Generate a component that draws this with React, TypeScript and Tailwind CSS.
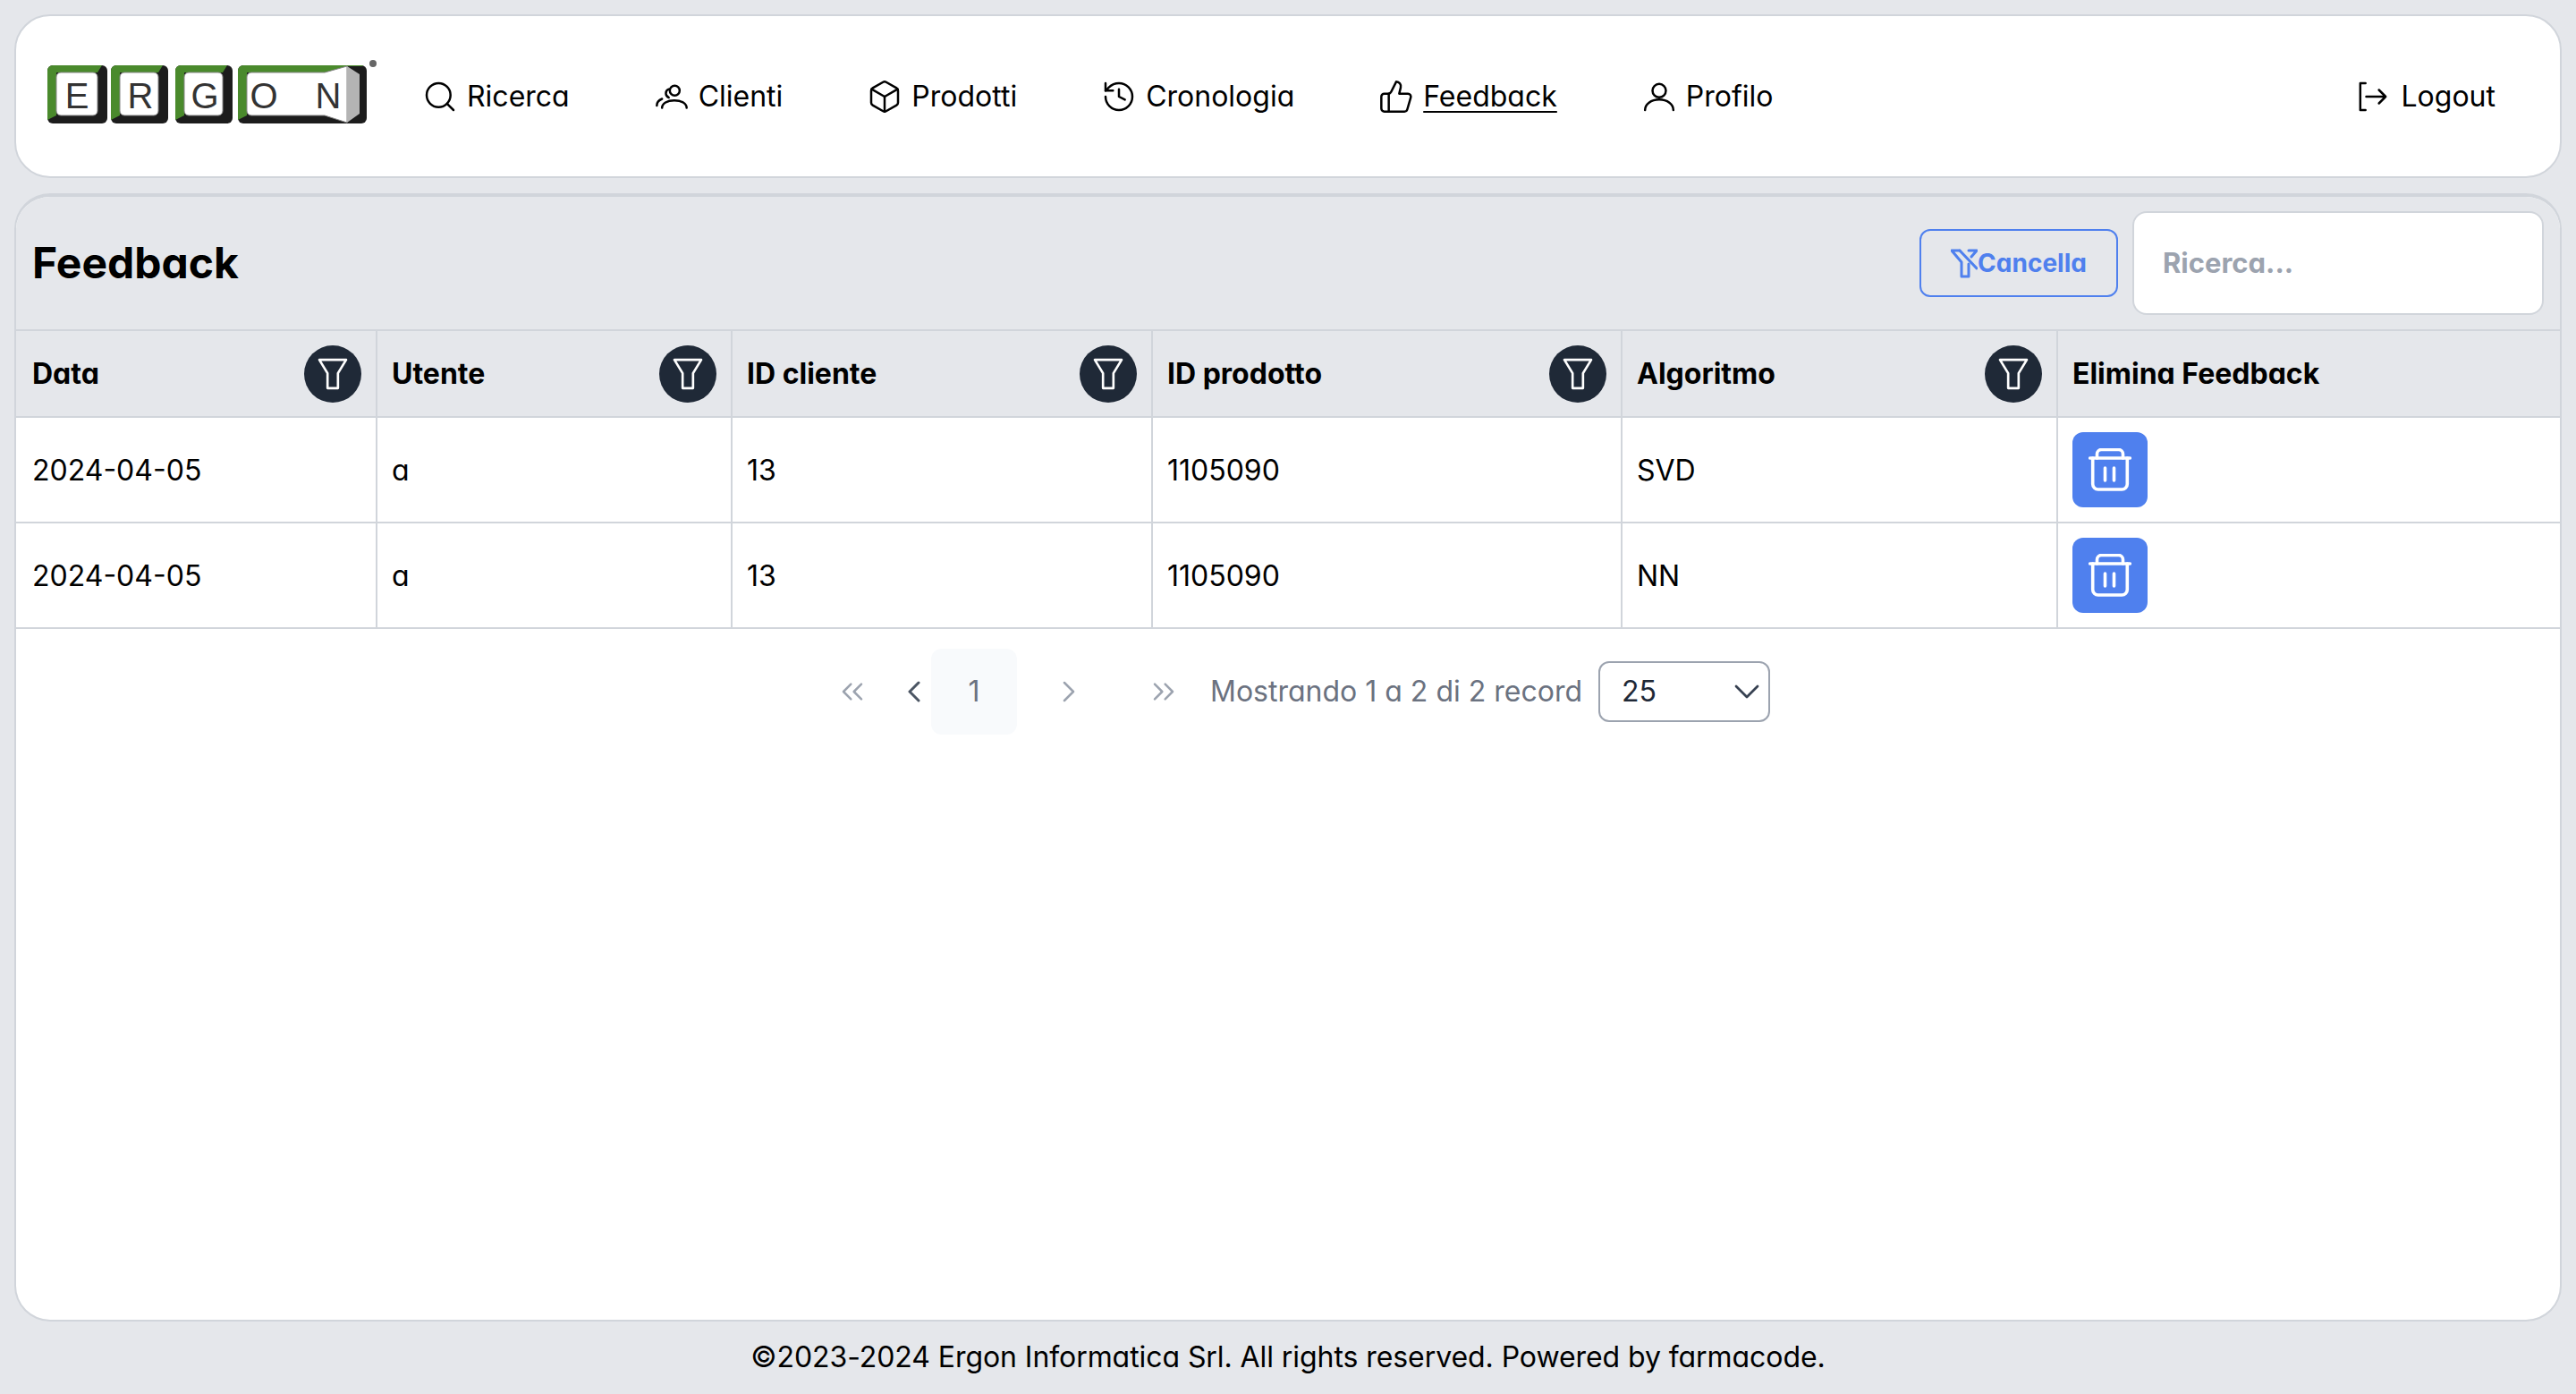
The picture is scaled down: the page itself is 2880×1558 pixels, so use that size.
import React from "react";
import { Search, Box, History, ThumbsUp, ChevronsLeft, ChevronLeft, ChevronRight, ChevronsRight, ChevronDown } from "lucide-react";

const IC = ({ children, className = "w-10 h-10" }: { children: React.ReactNode; className?: string }) => (
  <svg viewBox="0 0 24 24" fill="none" stroke="currentColor" strokeWidth={1.5} strokeLinecap="round" strokeLinejoin="round" className={className}>
    {children}
  </svg>
);

const Clients = () => (
  <IC>
    <circle cx="14" cy="8" r="3.3" />
    <path d="M5.5 19.5c0-3 3.5-5 8.25-5s8.25 2 8.25 5" />
    <path d="M10 7a3 3 0 0 0 0 5.6" />
    <path d="M2 18c0-2 1-3.5 3.5-4.5" />
  </IC>
);

const Person = () => (
  <IC>
    <circle cx="12" cy="8" r="4.5" />
    <path d="M2.5 21c0-4 4-7 9.5-7s9.5 3 9.5 7" />
  </IC>
);

const Logout = () => (
  <IC>
    <path d="M7 3H3.5v18H7" />
    <path d="M7.5 12h13M16 7.5l4.5 4.5-4.5 4.5" />
  </IC>
);

const Funnel = () => (
  <svg viewBox="0 0 24 24" fill="none" stroke="currentColor" strokeWidth={1.6} strokeLinejoin="round" className="w-10 h-10">
    <path d="M3 2.5h18l-5.5 9v10h-7v-10z" />
  </svg>
);

const FunnelX = () => (
  <svg viewBox="0 0 30 33" fill="none" stroke="currentColor" strokeWidth={3} strokeLinejoin="round" strokeLinecap="round" className="w-[30px] h-[33px] shrink-0">
    <path d="M10 2H1l11 13v16h8V17" />
    <path d="M10 2l19 20" />
    <path d="M20 2h9l-6 7" />
  </svg>
);

const Trash = () => (
  <svg viewBox="0 0 48 48" fill="none" stroke="currentColor" strokeWidth={3.6} strokeLinecap="round" strokeLinejoin="round" className="w-12 h-12">
    <path d="M1.7 11h44.6" />
    <path d="M9.5 11V6.5a5 5 0 0 1 5-5h19a5 5 0 0 1 5 5V11" />
    <path d="M4.7 11v29a6 6 0 0 0 6 6h26.6a6 6 0 0 0 6-6V11" />
    <path d="M18.5 22v14M28.5 22v14" />
  </svg>
);

const Key = ({ x, w, letter }: { x: number; w: number; letter: string }) => (
  <g>
    <rect x={x} y={0} width={w} height={65} rx={6} fill="#1c1c1c" />
    <path d={`M${x + 6} 0H${x + w - 6}l-5 8H${x + 10}v48l-10 5V6a6 6 0 0 1 6-6z`} fill="#4a8a2c" />
    <rect x={x + 10} y={8} width={w - 21} height={48} rx={5} fill="#fff" stroke="#888" strokeWidth={1} />
    <text x={x + 33} y={48} textAnchor="middle" fontFamily="Liberation Sans, sans-serif" fontSize={40} fill="#333">{letter}</text>
  </g>
);

const Logo = () => (
  <svg viewBox="0 0 372 72" className="w-[372px] h-[72px] shrink-0 -mt-[10px]" aria-label="ERGON">
    <g transform="translate(0 6)">
      <Key x={0} w={67} letter="E" />
      <Key x={71} w={64} letter="R" />
      <Key x={143} w={64} letter="G" />
      <rect x={213} y={0} width={144} height={65} rx={6} fill="#1c1c1c" />
      <path d="M219 0H352l1 1H335L310 8H223v48l-10 5V6a6 6 0 0 1 6-6z" fill="#4a8a2c" />
      <path d="M228 8H310L335 1V64L310 56H228a5 5 0 0 1-5-5V13a5 5 0 0 1 5-5z" fill="#fff" stroke="#888" strokeWidth={1} />
      <path d="M335 1l14 9v44l-14 10z" fill="#b4b4b4" />
      <text x={242} y={48} textAnchor="middle" fontFamily="Liberation Sans, sans-serif" fontSize={40} fill="#333">O</text>
      <text x={314} y={48} textAnchor="middle" fontFamily="Liberation Sans, sans-serif" fontSize={40} fill="#333">N</text>
    </g>
    <circle cx={364} cy={4} r={4} fill="#666" />
  </svg>
);

const nav = [
  { label: "Ricerca", icon: <Search className="w-10 h-10" strokeWidth={1.5} /> },
  { label: "Clienti", icon: <Clients /> },
  { label: "Prodotti", icon: <Box className="w-10 h-10" strokeWidth={1.5} /> },
  { label: "Cronologia", icon: <History className="w-10 h-10" strokeWidth={1.5} /> },
  { label: "Feedback", icon: <ThumbsUp className="w-10 h-10" strokeWidth={1.5} />, active: true },
  { label: "Profilo", icon: <Person /> },
];

const cols = [
  { label: "Data", w: "w-[403px]", pad: "pl-[18px] pr-4" },
  { label: "Utente", w: "w-[397px]", pad: "px-4" },
  { label: "ID cliente", w: "w-[470px]", pad: "px-4" },
  { label: "ID prodotto", w: "w-[525px]", pad: "px-4" },
  { label: "Algoritmo", w: "w-[487px]", pad: "px-4" },
];

const rows = [
  ["2024-04-05", "a", "13", "1105090", "SVD"],
  ["2024-04-05", "a", "13", "1105090", "NN"],
];

export default function App() {
  return (
    <div className="h-[1558px] overflow-hidden bg-[#e5e7eb] px-4 pt-4 pb-[2px] flex flex-col text-black font-['Inter','Liberation_Sans',sans-serif] [font-feature-settings:'cv11'] text-[32px]">
      <header className="h-[183px] shrink-0 bg-white rounded-[40px] border-2 border-[#d1d5db] flex items-center pl-[35px] pr-[72px]">
        <Logo />
        <nav className="flex items-center ml-[47px] gap-[94px]">
          {nav.map((n) => (
            <div key={n.label} className="flex items-center gap-[10px]">
              {n.icon}
              <span className={n.active ? "underline decoration-2 underline-offset-[5px]" : ""}>{n.label}</span>
            </div>
          ))}
        </nav>
        <div className="ml-auto flex items-center gap-[12px]">
          <Logout />
          <span>Logout</span>
        </div>
      </header>

      <main className="mt-[17px] h-[1261px] shrink-0 bg-white rounded-[40px] border-2 border-[#d1d5db] border-t-[4px] overflow-hidden flex flex-col">
        <div className="h-[148px] shrink-0 bg-[#e5e7eb] flex items-center justify-between pr-[18px] pl-[18px]">
          <h1 className="text-[48px] font-bold">Feedback</h1>
          <div className="flex items-center gap-4">
            <button className="w-[222px] h-[76px] rounded-xl border-2 border-[#4f80ee] text-[#4f80ee] font-bold text-[28px] flex items-center justify-center">
              <FunnelX />
              Cancella
            </button>
            <div className="w-[460px] h-[116px] bg-white rounded-2xl border-2 border-[#d1d5db] flex items-center pl-8 text-[#9ca3af] font-bold text-[31px]">
              Ricerca...
            </div>
          </div>
        </div>

        <table className="w-full table-fixed border-collapse">
          <thead>
            <tr className="h-[97px] bg-[#e5e7eb]">
              {cols.map((c) => (
                <th key={c.label} className={`${c.w} ${c.pad} border-2 border-l-0 border-[#d1d5db] text-left font-bold`}>
                  <div className="flex items-center justify-between">
                    <span>{c.label}</span>
                    <span className="w-16 h-16 rounded-full bg-[#1f2937] text-white flex items-center justify-center">
                      <Funnel />
                    </span>
                  </div>
                </th>
              ))}
              <th className="border-2 border-x-0 border-[#d1d5db] px-4 text-left font-bold">Elimina Feedback</th>
            </tr>
          </thead>
          <tbody>
            {rows.map((r, i) => (
              <tr key={i} className="h-[118px]">
                {r.map((v, j) => (
                  <td key={j} className={`${cols[j].pad} pt-[2px] border-2 border-l-0 border-[#d1d5db]`}>{v}</td>
                ))}
                <td className="border-2 border-x-0 border-[#d1d5db] px-4">
                  <button className="w-[84px] h-[84px] bg-[#4f80ee] rounded-xl text-white flex items-center justify-center">
                    <Trash />
                  </button>
                </td>
              </tr>
            ))}
          </tbody>
        </table>

        <div className="mt-[22px] flex items-center justify-center text-[#6b7280] pl-[18px]">
          <div className="w-[68px] flex justify-center text-[#9ca3af]"><ChevronsLeft className="w-10 h-10" strokeWidth={1.5} /></div>
          <div className="w-[38px] ml-4 flex justify-center text-[#4b5563]"><ChevronLeft className="w-10 h-10 shrink-0" strokeWidth={1.8} /></div>
          <div className="w-24 h-24 bg-[#f8fafc] rounded-xl flex items-center justify-center">1</div>
          <div className="w-[116px] flex justify-center text-[#9ca3af]"><ChevronRight className="w-10 h-10" strokeWidth={1.5} /></div>
          <div className="w-24 flex justify-center text-[#9ca3af]"><ChevronsRight className="w-10 h-10" strokeWidth={1.5} /></div>
          <span className="ml-[4px]">Mostrando 1 a 2 di 2 record</span>
          <div className="ml-[18px] w-[192px] h-[68px] border-2 border-[#9ca3af] rounded-xl flex items-center justify-between pl-6 text-[#1f2937]">
            <span>25</span>
            <ChevronDown className="w-12 h-12 shrink-0 text-[#374151]" strokeWidth={1.4} />
          </div>
        </div>
      </main>

      <footer className="flex-1 flex items-center justify-center tracking-[-0.07px]">
        ©2023-2024 Ergon Informatica Srl. All rights reserved. Powered by farmacode.
      </footer>
    </div>
  );
}
